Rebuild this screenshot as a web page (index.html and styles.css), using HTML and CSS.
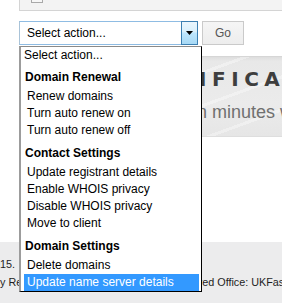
FILE: index.html
```html
<!DOCTYPE html>
<html lang="en">
<head>
<meta charset="utf-8">
<title>Bulk actions</title>
<link rel="stylesheet" href="styles.css">
</head>
<body>
<div class="page">
  <div class="top-panel"><span class="checkbox"></span></div>

  <div class="actions">
    <div class="select">
      <span class="select-text">Select action...</span>
      <span class="select-arrow">
        <svg width="7" height="4" viewBox="0 0 7 4"><polygon points="0,0 7,0 3.5,4" fill="#000"/></svg>
      </span>
    </div>
    <button class="go" type="button">Go</button>
  </div>

  <div class="banner">
    <div class="banner-title">SSL CERTIFICATES</div>
    <div class="banner-sub">Get secured in minutes with UKFast</div>
  </div>

  <footer class="footer">
    <div class="footer-line1"><span>Copyright © UKFast.net Limited 2015.</span></div>
    <p class="footer-line2">Company Registration No. 3845616 (UK). Registered Office: UKFast Campus, Birley Fields, Manchester</p>
  </footer>

  <div class="dropdown">
    <div class="opt-first">Select action...</div>
    <div class="group-label group-first">Domain Renewal</div>
    <div class="opt">Renew domains</div>
    <div class="opt">Turn auto renew on</div>
    <div class="opt">Turn auto renew off</div>
    <div class="group-label">Contact Settings</div>
    <div class="opt">Update registrant details</div>
    <div class="opt">Enable WHOIS privacy</div>
    <div class="opt">Disable WHOIS privacy</div>
    <div class="opt">Move to client</div>
    <div class="group-label">Domain Settings</div>
    <div class="opt">Delete domains</div>
    <div class="opt selected">Update name server details</div>
  </div>
</div>
</body>
</html>
```

FILE: styles.css
```css
* { box-sizing: border-box; }

html, body {
  margin: 0;
  padding: 0;
  background: #fff;
}

.page {
  position: relative;
  width: 282px;
  height: 303px;
  overflow: hidden;
  font-family: "Liberation Sans", Arial, sans-serif;
  font-size: 12px;
  color: #000;
}

/* top panel (cut off at the top of the view) */
.top-panel {
  margin-left: 19px;
  width: 300px;
  height: 11px;
  border-left: 1px solid #d4d4d4;
  border-bottom: 1px solid #d4d4d4;
  background: #f3f3f3;
}

.checkbox {
  display: block;
  margin-left: 11px;
  width: 12px;
  height: 3px;
  border: 1px solid #a9a9a9;
  border-top: 0;
  background: #f7f7f7;
}

/* action row */
.actions {
  display: flex;
  gap: 4px;
  margin: 10px 0 0 19px;
}

.select {
  display: flex;
  align-items: center;
  width: 179px;
  height: 24px;
  border: 1px solid #8fbce3;
  border-right: 0;
  border-left-color: #a9c3d8;
  background: #fff;
}

.select-text {
  padding-left: 7px;
  line-height: 22px;
}

.select-arrow {
  display: flex;
  align-items: center;
  justify-content: center;
  margin: -1px 0 -1px auto;
  align-self: stretch;
  width: 17px;
  border: 1px solid #3c7fb1;
  background: linear-gradient(#eaf6fd 0%, #d9f0fc 45%, #bee6fd 50%, #a7d9f5 100%);
}

.go {
  width: 42px;
  height: 24px;
  padding: 0;
  border: 1px solid #cacaca;
  background: linear-gradient(#f5f5f5, #ededed);
  font-family: "Liberation Sans", Arial, sans-serif;
  font-size: 12px;
  color: #555;
}

/* banner behind the open list */
.banner {
  margin: 11px 0 0 19px;
  width: 300px;
  height: 81px;
  padding-top: 12px;
  border-top: 1px solid #d6d6d6;
  border-bottom: 1px solid #dedede;
  background:
    repeating-linear-gradient(160deg, rgba(255,255,255,0) 0 14px, rgba(255,255,255,0.35) 14px 17px, rgba(255,255,255,0) 17px 31px),
    linear-gradient(#dedede 0, #e8e8e8 4px, #ebebeb 60%, #e6e6e6 100%);
  white-space: nowrap;
}

.banner-title {
  padding-left: 32px;
  font-family: "DejaVu Sans", "Liberation Sans", sans-serif;
  font-size: 20px;
  line-height: 20px;
  font-weight: bold;
  letter-spacing: 5.5px;
  color: #3e3e3e;
}

.banner-sub {
  margin-top: 14px;
  padding-left: 71px;
  font-size: 18px;
  line-height: 18px;
  color: #707070;
}

/* footer */
.footer {
  margin-top: 105px;
  height: 70px;
  padding-top: 16px;
  background: #ececed;
  font-size: 10.8px;
  line-height: 13px;
  color: #1e1e1e;
  white-space: nowrap;
}

.footer-line1 {
  display: flex;
  justify-content: flex-end;
  width: 15px;
}

.footer-line2 {
  margin: 5px 0 0 -40.8px;
}

/* open select list (overlay) */
.dropdown {
  position: absolute;
  left: 19px;
  top: 46px;
  width: 183px;
  height: 246px;
  padding: 0 2px 0 3px;
  border: 1px solid #000;
  border-top-color: #8a8a8a;
  border-left: 2px solid #9c9c9c;
  background: #fff;
  white-space: nowrap;
}

.opt-first,
.opt,
.group-label {
  height: 17px;
  line-height: 17px;
}

.group-label {
  margin: 6px 0 2px;
  padding-left: 1px;
  font-weight: bold;
}

.group-label.group-first {
  margin-top: 5px;
}

.opt {
  padding-left: 3px;
}

.opt.selected {
  background: #3399ff;
  color: #fff;
}
```
